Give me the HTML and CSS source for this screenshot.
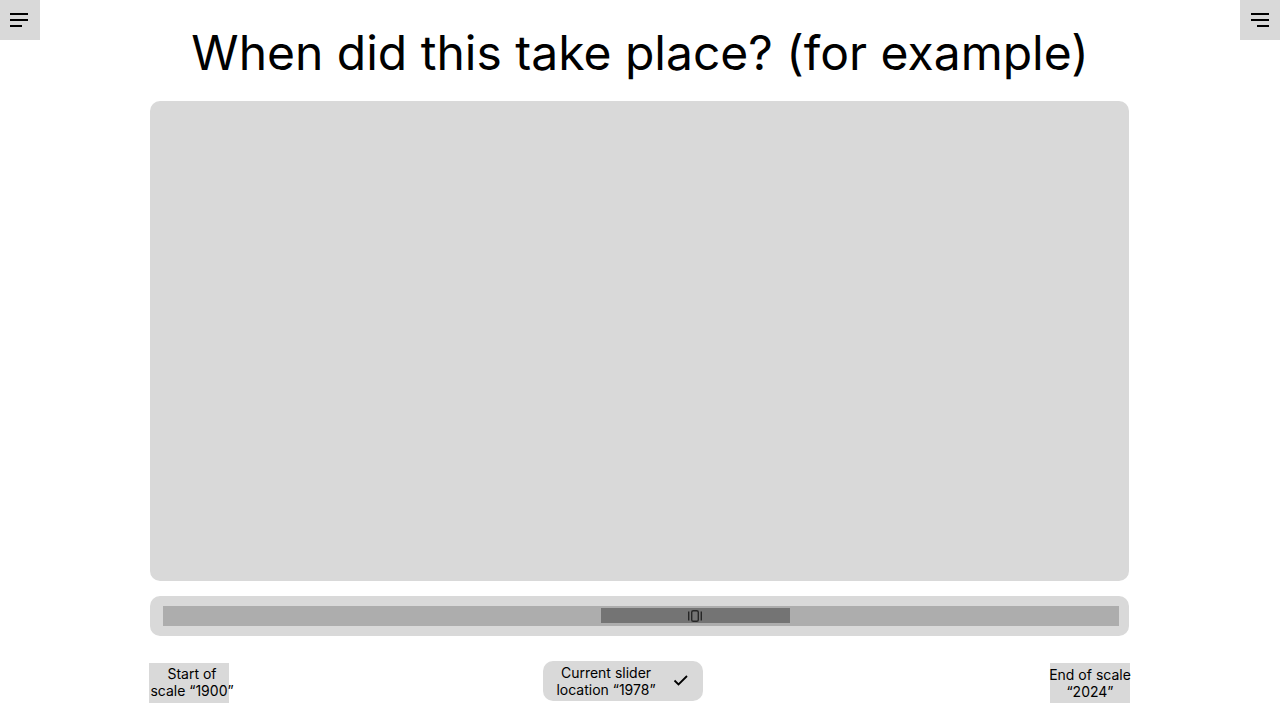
FILE: index.html
```html
<!DOCTYPE html>
<html lang="en">
<head>
<meta charset="utf-8">
<title>When did this take place?</title>
<link rel="stylesheet" href="styles.css">
</head>
<body>
<header class="header">
  <button class="menu-btn" aria-label="Menu">
    <svg width="40" height="40" viewBox="0 0 40 40"><rect x="10" y="13" width="18" height="2"/><rect x="10" y="19" width="18" height="2"/><rect x="10" y="25" width="12" height="2"/></svg>
  </button>
  <h1 class="title">When did this take place? (for example)</h1>
  <button class="menu-btn" aria-label="Filters">
    <svg width="40" height="40" viewBox="0 0 40 40"><rect x="11" y="13" width="18" height="2"/><rect x="11" y="19" width="18" height="2"/><rect x="17" y="25" width="12" height="2"/></svg>
  </button>
</header>
<main class="main">
  <div class="card"></div>
  <div class="slider">
    <div class="track">
      <div class="thumb">
        <svg class="handle" width="16" height="14" viewBox="0 0 16 14" fill="none" stroke="#262626" stroke-width="1.4">
          <rect x="4.7" y="1.7" width="6.6" height="10.6" rx="1.6"/>
          <line x1="1.7" y1="2.4" x2="1.7" y2="11.6"/>
          <line x1="14.3" y1="2.4" x2="14.3" y2="11.6"/>
        </svg>
      </div>
    </div>
  </div>
  <div class="labels">
    <div class="end-label end-left">Start of<br>scale “1900”</div>
    <div class="current">
      <span class="current-text">Current slider<br>location “1978”</span>
      <svg class="check" width="16" height="16" viewBox="0 0 16 16" fill="none" stroke="#000" stroke-width="1.8"><path d="M1.5 7.5 L5.5 11.5 L14 3"/></svg>
    </div>
    <div class="end-label end-right">End of scale<br>“2024”</div>
  </div>
</main>
</body>
</html>
```
FILE: styles.css
```css
* { box-sizing: border-box; }
html, body { margin: 0; padding: 0; background: #fff; }
body {
  font-family: Inter, "Noto Sans", sans-serif;
  color: #000;
  width: 1280px;
  height: 720px;
  overflow: hidden;
}
.header {
  display: flex;
  align-items: flex-start;
}
.menu-btn {
  width: 40px;
  height: 40px;
  padding: 0;
  border: 0;
  background: #d9d9d9;
  flex: none;
  display: block;
}
.menu-btn svg { display: block; fill: #000; }
.title {
  flex: 1;
  margin: 24px 0 0;
  font-size: 48px;
  line-height: 58px;
  font-weight: 400;
  text-align: center;
}
.main {
  width: 979px;
  margin: 19px 0 0 150px;
  display: flex;
  flex-direction: column;
}
.card {
  height: 480px;
  background: #d9d9d9;
  border-radius: 10px;
}
.slider {
  margin-top: 15px;
  height: 40px;
  background: #d9d9d9;
  border-radius: 10px;
  padding: 10px 10px 10px 13px;
}
.track {
  height: 20px;
  background: #adadad;
  padding: 2px 0 0 438px;
}
.thumb {
  width: 189px;
  height: 15px;
  background: #747474;
  display: flex;
  justify-content: center;
  align-items: center;
}
.handle { display: block; margin-left: -2px; }
.labels {
  margin-top: 25px;
  margin-left: -1px;
  margin-right: -1px;
  display: flex;
  align-items: flex-start;
  font-size: 14px;
  line-height: 17px;
}
.end-label {
  width: 80px;
  height: 40px;
  margin-top: 2px;
  background: #d9d9d9;
  display: flex;
  align-items: center;
  justify-content: center;
  text-align: center;
  white-space: nowrap;
}
.end-left {
  padding: 0 0 3px 6px;
}
.current {
  margin-left: 314px;
  width: 160px;
  height: 40px;
  background: #d9d9d9;
  border-radius: 10px;
  display: flex;
  align-items: center;
  padding: 0 14px 0 13px;
  gap: 16px;
}
.current-text {
  width: 100px;
  text-align: center;
  white-space: nowrap;
  padding-bottom: 1px;
}
.check { display: block; flex: none; margin-left: 1px; }
.end-right { margin-left: auto; }
```
